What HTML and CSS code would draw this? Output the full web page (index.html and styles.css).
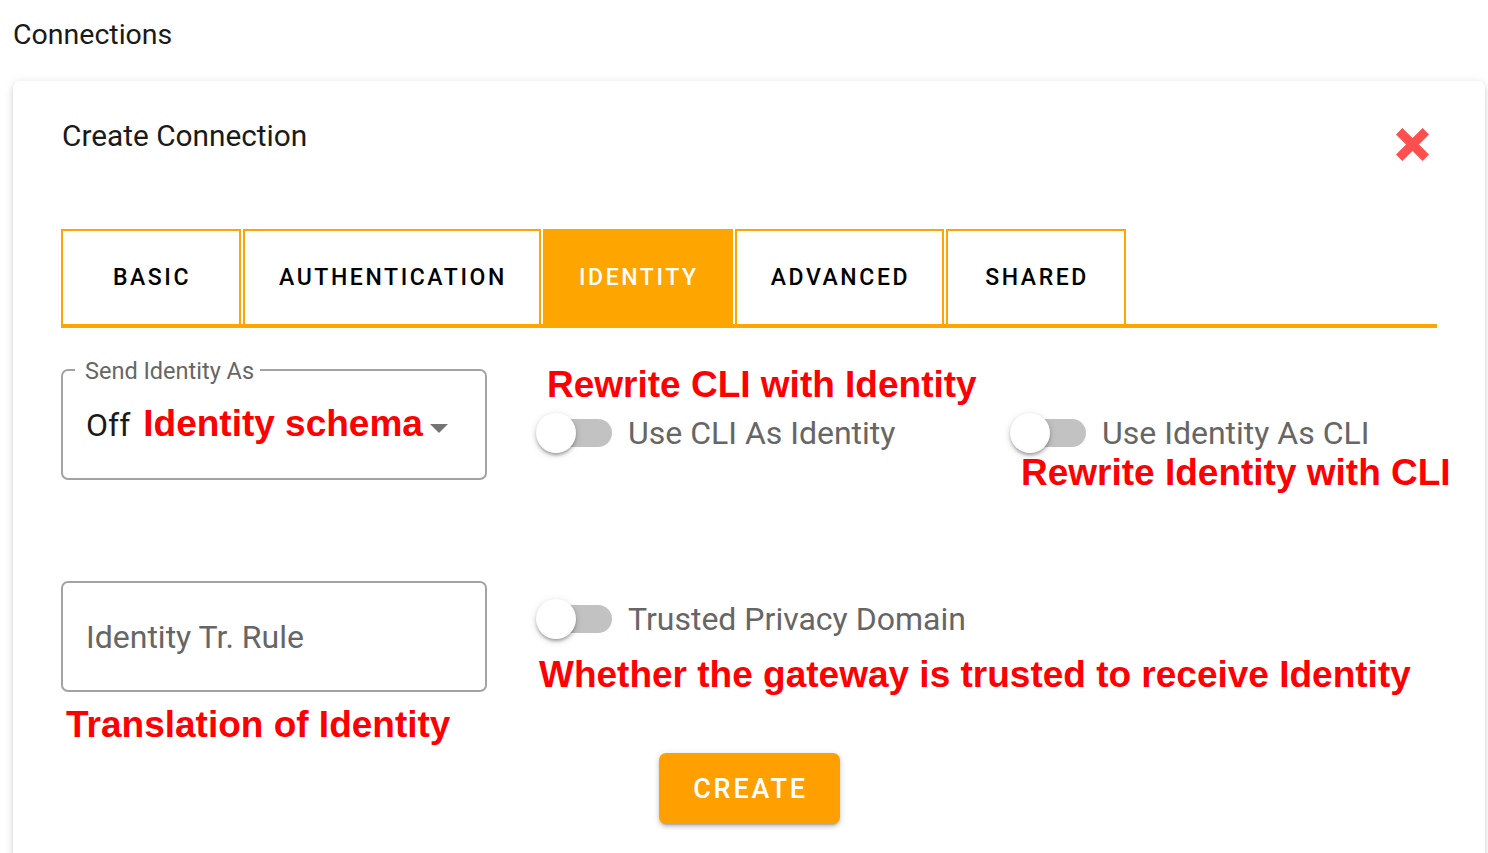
FILE: index.html
```html
<!DOCTYPE html>
<html lang="en">
<head>
<meta charset="utf-8">
<title>Connections</title>
<link rel="stylesheet" href="styles.css">
</head>
<body>
<h1 class="page-title">Connections</h1>
<section class="card">
  <header class="card-header">
    <h2 class="card-title">Create Connection</h2>
    <button class="close-btn" aria-label="Close">
      <svg width="33" height="33" viewBox="0 0 33 33"><path d="M3.2 3.2 L29.8 29.8 M29.8 3.2 L3.2 29.8" stroke="#ff4f4f" stroke-width="9" stroke-linecap="butt" fill="none"/></svg>
    </button>
  </header>

  <nav class="tabs">
    <div class="tab">BASIC</div>
    <div class="tab">AUTHENTICATION</div>
    <div class="tab active">IDENTITY</div>
    <div class="tab">ADVANCED</div>
    <div class="tab">SHARED</div>
  </nav>

  <div class="row row-one">
    <div class="select">
      <span class="select-label">Send Identity As</span>
      <span class="select-value">Off</span>
      <span class="note note-inline">Identity schema</span>
      <span class="select-arrow"></span>
    </div>
    <div class="group group-a">
      <div class="note note-a">Rewrite CLI with Identity</div>
      <div class="switch">
        <span class="switch-control"><span class="switch-track"></span><span class="switch-thumb"></span></span>
        <span class="switch-label">Use CLI As Identity</span>
      </div>
    </div>
    <div class="group group-b">
      <div class="switch">
        <span class="switch-control"><span class="switch-track"></span><span class="switch-thumb"></span></span>
        <span class="switch-label">Use Identity As CLI</span>
      </div>
      <div class="note note-b">Rewrite Identity with CLI</div>
    </div>
  </div>

  <div class="row row-two">
    <div class="field-col">
      <div class="textfield"><span class="placeholder">Identity Tr. Rule</span></div>
      <div class="note note-c">Translation of Identity</div>
    </div>
    <div class="group group-c">
      <div class="switch">
        <span class="switch-control"><span class="switch-track"></span><span class="switch-thumb"></span></span>
        <span class="switch-label">Trusted Privacy Domain</span>
      </div>
      <div class="note note-d">Whether the gateway is trusted to receive Identity</div>
    </div>
  </div>

  <div class="actions">
    <button class="create-btn">CREATE</button>
  </div>
</section>
</body>
</html>
```

FILE: styles.css
```css
* { box-sizing: border-box; }
html, body { margin: 0; padding: 0; background: #fff; }
body {
  font-family: Roboto, "Noto Sans", Arial, sans-serif;
  color: #1c1c1c;
  width: 1488px;
  height: 853px;
  overflow: hidden;
}
.page-title {
  margin: 18px 0 0 13px;
  font-size: 28.5px;
  line-height: 33px;
  font-weight: 400;
  color: #1a1a1a;
}
.card {
  margin: 30px 0 0 13px;
  width: 1472px;
  height: 800px;
  padding: 38px 48px 0 48px;
  background: #fff;
  border-radius: 7px;
  box-shadow: 0 2px 3px -1px rgba(0,0,0,0.18), 0 3px 6px 0 rgba(0,0,0,0.10), 0 1px 12px 0 rgba(0,0,0,0.08);
}
.card-header {
  display: flex;
  justify-content: space-between;
  align-items: flex-start;
  height: 34px;
}
.card-title {
  margin: 0 0 0 1px;
  font-size: 29.8px;
  line-height: 34px;
  font-weight: 400;
  color: #1a1a1a;
}
.close-btn {
  margin: 9px 8px 0 0;
  padding: 0;
  border: 0;
  background: none;
  width: 33px;
  height: 33px;
  flex: none;
}
.close-btn svg { display: block; }

.tabs {
  margin-top: 76px;
  display: flex;
  gap: 2px;
  border-bottom: 4px solid #ffa500;
}
.tab {
  height: 95px;
  min-width: 180px;
  padding: 0 32px 0 34px;
  border: 2px solid #ffa500;
  border-bottom: 0;
  display: flex;
  align-items: center;
  justify-content: center;
  font-size: 23px;
  font-weight: 500;
  letter-spacing: 2.6px;
  color: #000;
}
.tab.active {
  background: #ffa500;
  color: #fff;
}

.row { display: flex; align-items: flex-start; }
.row-one { margin-top: 36px; }
.row-two { margin-top: 87px; }

.note {
  font-family: "Liberation Sans", Arial, sans-serif;
  font-weight: 700;
  font-size: 37px;
  line-height: 42px;
  color: #ff0000;
  white-space: nowrap;
}

.select {
  position: relative;
  flex: none;
  margin-top: 5px;
  width: 426px;
  height: 111px;
  border: 2px solid #a3a3a3;
  border-radius: 7px;
  padding: 32px 0 0 23px;
  display: flex;
  align-items: baseline;
}
.select-label {
  position: absolute;
  left: 12px;
  top: -13px;
  padding: 0 6px 0 10px;
  background: #fff;
  font-size: 23.5px;
  line-height: 26px;
  color: #666;
}
.select-value {
  font-size: 32px;
  line-height: 38px;
  color: #1a1a1a;
}
.note-inline { margin-left: 13px; }
.select-arrow {
  align-self: flex-start;
  margin: 21px 0 0 7px;
  width: 0;
  height: 0;
  border-left: 9.5px solid transparent;
  border-right: 9.5px solid transparent;
  border-top: 9px solid #757575;
}

.group { flex: none; }
.group-a { width: 474px; margin-left: 49px; }
.note-a { padding-left: 11px; }
.group-a .switch { margin-top: 7px; }
.group-b { margin-top: 49px; }
.note-b { padding-left: 11px; margin-top: -1px; }

.switch { display: flex; align-items: center; height: 40px; }
.switch-control {
  position: relative;
  width: 76px;
  height: 40px;
  display: flex;
  align-items: center;
  flex: none;
}
.switch-track {
  margin-left: 8px;
  width: 68px;
  height: 28px;
  border-radius: 14px;
  background: #c2c2c2;
}
.switch-thumb {
  position: absolute;
  left: 0;
  top: 0;
  width: 40px;
  height: 40px;
  border-radius: 50%;
  background: #fff;
  box-shadow: 0 3px 3px -1px rgba(0,0,0,0.22), 0 2px 4px 0 rgba(0,0,0,0.14), 0 2px 8px 0 rgba(0,0,0,0.12);
}
.switch-label {
  margin-left: 16px;
  font-size: 32px;
  line-height: 38px;
  color: #666;
  white-space: nowrap;
}

.field-col { width: 426px; flex: none; }
.textfield {
  width: 426px;
  height: 111px;
  border: 2px solid #a3a3a3;
  border-radius: 7px;
  padding-left: 23px;
  display: flex;
  align-items: center;
}
.placeholder {
  font-size: 32px;
  line-height: 38px;
  color: #666;
}
.note-c { margin-top: 12px; padding-left: 5px; }

.group-c { margin-left: 49px; margin-top: 18px; }
.note-d { margin-top: 15px; padding-left: 3px; }

.actions {
  margin-top: 7px;
  display: flex;
  justify-content: center;
}
.create-btn {
  width: 181px;
  height: 71px;
  border: 0;
  border-radius: 7px;
  background: #ffa000;
  color: #fff;
  font-family: Roboto, Arial, sans-serif;
  font-size: 27px;
  font-weight: 500;
  letter-spacing: 2.8px;
  padding: 0 0 0 3px;
  box-shadow: 0 3px 2px -2px rgba(0,0,0,0.2), 0 3px 4px 0 rgba(0,0,0,0.14), 0 1px 7px 0 rgba(0,0,0,0.12);
}
```
